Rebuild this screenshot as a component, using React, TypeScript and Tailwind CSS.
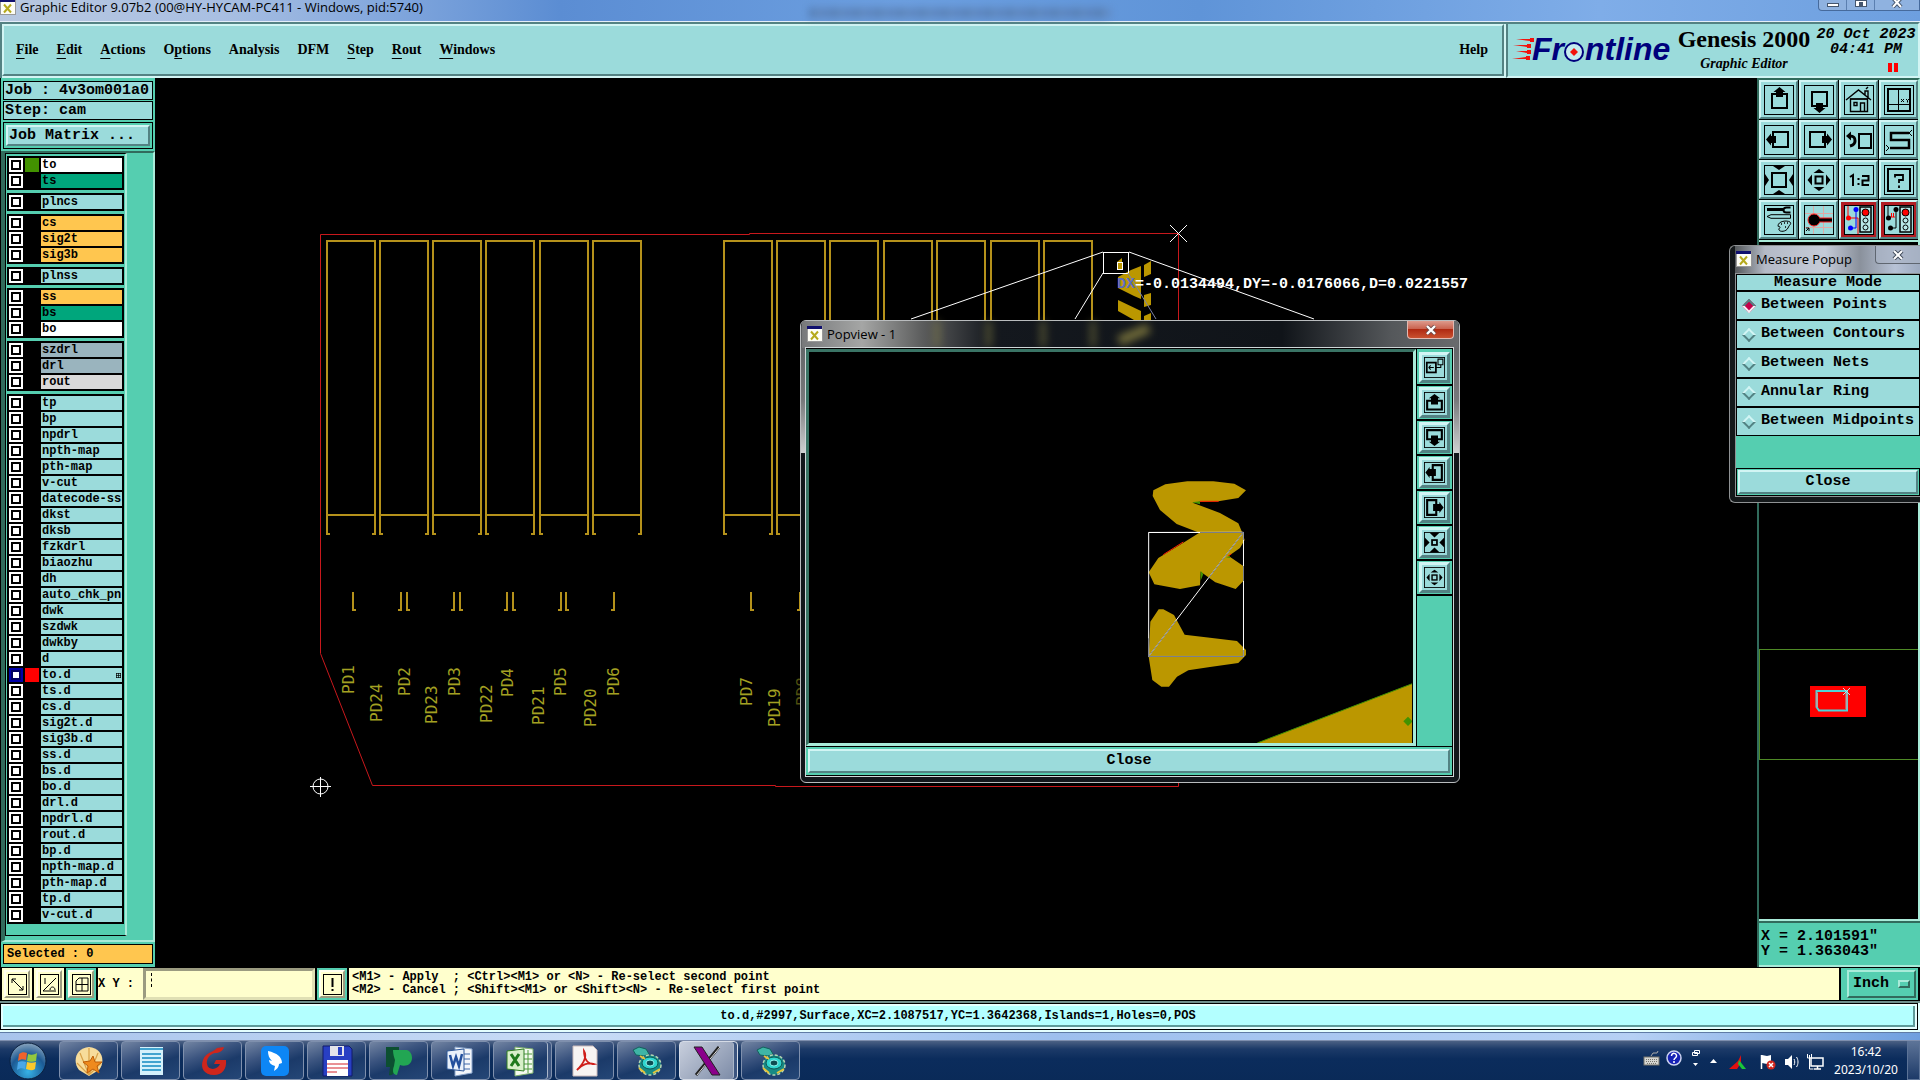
import React, { useState } from "react";
import { clsx } from "clsx";

interface Layer {
  name: string;
  bg: string;
  swatch?: string;
  checked?: boolean;
}

const CYAN = "bg-[#9bdbdb]";
const ORANGE = "bg-[#ffc64f]";
const GREEN = "bg-[#00a67c]";
const STEEL = "bg-[#9ab4be]";

const plain = (names: string): Layer[] => names.split(" ").map((name) => ({ name, bg: CYAN }));

const layerGroups: Layer[][] = [
  [
    { name: "to", bg: "bg-white", swatch: "bg-[#429200]" },
    { name: "ts", bg: GREEN },
  ],
  plain("plncs"),
  [
    { name: "cs", bg: ORANGE },
    { name: "sig2t", bg: ORANGE },
    { name: "sig3b", bg: ORANGE },
  ],
  plain("plnss"),
  [
    { name: "ss", bg: ORANGE },
    { name: "bs", bg: GREEN },
    { name: "bo", bg: "bg-white" },
  ],
  [
    { name: "szdrl", bg: STEEL },
    { name: "drl", bg: STEEL },
    { name: "rout", bg: "bg-[#d9d9d9]" },
  ],
  [
    ...plain("tp bp npdrl npth-map pth-map v-cut datecode-ss dkst dksb fzkdrl biaozhu dh auto_chk_pnl dwk szdwk dwkby d"),
    { name: "to.d", bg: CYAN, swatch: "bg-[#ff0000]", checked: true },
    ...plain("ts.d cs.d sig2t.d sig3b.d ss.d bs.d bo.d drl.d npdrl.d rout.d bp.d npth-map.d pth-map.d tp.d v-cut.d"),
  ],
];

const menus = [
  { label: "File", key: 0 },
  { label: "Edit", key: 0 },
  { label: "Actions", key: 0 },
  { label: "Options", key: 1 },
  { label: "Analysis", key: -1 },
  { label: "DFM", key: -1 },
  { label: "Step", key: 0 },
  { label: "Rout", key: 0 },
  { label: "Windows", key: 0 },
];

// Motif style bevels
const raised =
  "border-t-[#d2f5f4] border-l-[#d2f5f4] border-r-[#538283] border-b-[#538283] bg-[#9bdbdb]";

/* ---------- Icons ---------- */

const iconShapes: Record<string, React.ReactNode> = {
  up: (
    <>
      <path d="M12 9H8v14h15V9h-4" fill="none" strokeWidth="2" />
      <path d="M15.500 2l6 5h-2.500v5h-7V7H9.500z" fill="#000" stroke="none" />
    </>
  ),
  down: (
    <>
      <path d="M12 21H8V7h15v14h-4" fill="none" strokeWidth="2" />
      <path d="M15.500 28l6-5h-2.500v-5h-7v5H9.500z" fill="#000" stroke="none" />
    </>
  ),
  left: (
    <>
      <path d="M9 11V7h15v15H9v-4" fill="none" strokeWidth="2" />
      <path d="M2 14.500l5-6v2.500h5v7H7v2.500z" fill="#000" stroke="none" />
    </>
  ),
  right: (
    <>
      <path d="M21 11V7H6v15h15v-4" fill="none" strokeWidth="2" />
      <path d="M28 14.500l-5-6v2.500h-5v7h5v2.500z" fill="#000" stroke="none" />
    </>
  ),
  smallUp: (
    <>
      <path d="M10 12.500H4.500v12.500h21V12.500H20" fill="none" strokeWidth="3" />
      <path d="M15 3l8 6h-3v9H10V9H7z" fill="#000" stroke="none" />
    </>
  ),
  smallDown: (
    <>
      <path d="M10 17.500H4.500V4.500h21v13H20" fill="none" strokeWidth="3" />
      <path d="M15 27l8-6h-3v-9H10v9H7z" fill="#000" stroke="none" />
    </>
  ),
  smallLeft: (
    <>
      <path d="M12.500 10V4.500h13v21h-13V20" fill="none" strokeWidth="3" />
      <path d="M2 15l6-8v3h9v10H8v3z" fill="#000" stroke="none" />
    </>
  ),
  smallRight: (
    <>
      <path d="M17.500 10V4.500h-13v21h13V20" fill="none" strokeWidth="3" />
      <path d="M28 15l-6-8v3h-9v10h9v3z" fill="#000" stroke="none" />
    </>
  ),
  home: (
    <>
      <path d="M2 15L14.500 5 27 15M21 10V6h3v6M22 4l2-2M6.500 14v12.500h17V14zM16.500 26V18h4v8M10 17.500h3v3h-3z" fill="none" strokeWidth="1.400" />
      <path d="M6 14h18" />
    </>
  ),
  panel: (
    <>
      <rect x="4" y="4" width="22" height="22" fill="none" strokeWidth="2" />
      <path d="M14.500 4v22M4 19.500h22M17 14l3 3M20 14l-3 3M22 14l1.500 1.500L25 14M23.500 15.500V17.500" fill="none" />
    </>
  ),
  undo: (
    <>
      <rect x="15" y="9" width="12" height="14" fill="none" strokeWidth="2" />
      <path d="M6 11c5 0 5 3 5 5s-1 4-5 5" fill="none" strokeWidth="3" />
      <path d="M2 11l5-4.500v9z" fill="#000" stroke="none" />
    </>
  ),
  serpent: (
    <>
      <path d="M25 8H7v7h18v8H6" fill="none" strokeWidth="2.500" />
      <path d="M28 5l-3 3 3 3M2 20l3 3-3 3" fill="none" />
    </>
  ),
  fitIn: (
    <>
      <rect x="8" y="8" width="14" height="14" fill="none" strokeWidth="2" />
      <path d="M9 1h12l-6 4zM9 29h12l-6-4zM1 9v12l4-6zM29 9v12l-4-6z" fill="#000" stroke="none" />
    </>
  ),
  fitOut: (
    <>
      <rect x="11.500" y="11.500" width="7" height="7" fill="none" strokeWidth="2" />
      <path d="M9.500 8h11L15 4zM9.500 22h11L15 26zM8 9.500v11L3.500 15zM22 9.500v11l4.500-5.500z" fill="#000" stroke="none" />
    </>
  ),
  smallIn: (
    <>
      <rect x="11.500" y="11.500" width="7" height="7" fill="none" strokeWidth="2.500" />
      <path d="M8 1h14l-7 7zM8 29h14l-7-7zM1 8v14l7-7zM29 8v14l-7-7z" fill="#000" stroke="none" />
    </>
  ),
  half: <path d="M6 12l3-2v11M14.500 13v2M14.500 18v2M18 11h6.500v4.500H18.500V20H25" fill="none" strokeWidth="2" />,
  help: (
    <>
      <rect x="4" y="4" width="22" height="22" fill="none" strokeWidth="2" />
      <path d="M11 12.500V10h8v5h-4v3M15 20.500v2.500" fill="none" strokeWidth="1.800" />
    </>
  ),
  tools: (
    <>
      <path d="M3 4.500h17" strokeWidth="3" />
      <path d="M26.500 2.500h-4a3 2.500 0 0 0 0 5h4" fill="none" strokeWidth="2" />
      <path d="M3 11.500l4-1.800h19.500v3.600H7z" fill="none" />
      <path d="M14 21c0-5 9-6 12-4 2 2-1 3-2 6-2 4-8 4-9 2s2-2 1-3-2 0-2-1z" fill="none" />
      <path d="M17 19h1M20 18h1M23 18h1M21 22h1" strokeWidth="1.500" />
    </>
  ),
  pad: (
    <>
      <path d="M9.500 1v28M19.500 1v28M1 8.500h28M1 22.500h28" stroke="#e0a9a5" fill="none" />
      <path d="M10 15h18" stroke="#ff2020" strokeWidth="5" />
      <circle cx="10" cy="15" r="6" fill="#000" stroke="#ff2020" />
      <path d="M10 15h18" strokeWidth="3" />
      <path d="M2 26l3-3M2 23h3v3" fill="none" />
    </>
  ),
  netBlue: (
    <>
      <path d="M4 1v12h10v16" stroke="#f00" fill="none" />
      <path d="M12 5v18H7" stroke="#00f" fill="none" />
      <circle cx="4.500" cy="13" r="2.500" fill="#f00" stroke="none" />
      <circle cx="12" cy="4.500" r="2.500" fill="#00f" stroke="none" />
      <circle cx="6.500" cy="23" r="2.500" fill="#00f" stroke="none" />
      <rect x="16" y="2" width="11" height="25" fill="#b9e6e6" strokeWidth="1.500" />
      <circle cx="21.500" cy="7.500" r="3.500" fill="#f00" />
      <circle cx="21.500" cy="15.500" r="2.500" fill="none" />
      <circle cx="21.500" cy="22.500" r="2.500" fill="none" />
    </>
  ),
  netBlack: (
    <>
      <path d="M4 1v12M12 5v18H7" fill="none" />
      <path d="M6 12h5M7.500 8v4M9.500 8v4" stroke="#f00" fill="none" />
      <circle cx="4.500" cy="13" r="2.500" fill="#000" stroke="none" />
      <circle cx="12" cy="4.500" r="2.500" fill="#000" stroke="none" />
      <circle cx="6.500" cy="23" r="2.500" fill="#000" stroke="none" />
      <rect x="16" y="2" width="11" height="25" fill="#b9e6e6" strokeWidth="1.500" />
      <circle cx="21.500" cy="7.500" r="3.500" fill="#f00" />
      <circle cx="21.500" cy="15.500" r="2.500" fill="none" />
      <circle cx="21.500" cy="22.500" r="2.500" fill="none" />
    </>
  ),
  popup: (
    <>
      <rect x="4" y="8" width="13" height="14" fill="none" strokeWidth="2.500" />
      <path d="M20 3h7v8h-7zM17 15h7v-4M7 15h7M9.500 12L7 15l2.500 3" fill="none" strokeWidth="1.500" />
    </>
  ),
};

function ToolIcon({ name, size }: { name: string; size: number }) {
  return (
    <svg width={size} height={size} viewBox="0 0 30 30" stroke="#000" className="shrink-0">
      <rect x="0.500" y="0.500" width="29" height="29" fill="none" strokeWidth={size < 30 ? 1.5 : 1} />
      {iconShapes[name]}
    </svg>
  );
}

function XIcon() {
  return (
    <svg width="16" height="16" viewBox="0 0 16 16" className="shrink-0">
      <rect x="0.500" y="0.500" width="15" height="15" fill="#fdfdf5" stroke="#999" />
      <rect width="15" height="3" fill="#10106e" />
      <path d="M4 5.500l7 8M11 5.500l-7 8" stroke="#b5a91c" strokeWidth="2" />
    </svg>
  );
}

/* ---------- Top bars ---------- */

function TitleBar() {
  return (
    <header className="relative flex h-[22px] items-start justify-between border-b border-[#e4edf8] bg-[linear-gradient(90deg,#b8c8e0_0px,#a9bfe2_220px,#7fa5dc_400px,#5b8dd3_560px,#6c9fe0_900px,#5f94d8_1200px,#7fade8_1600px,#6d9fdf_1920px)]">
      <div className="absolute top-2 left-[810px] h-[10px] w-[300px] bg-[repeating-linear-gradient(90deg,#30507a_0px,#6f93c4_9px,#44659a_15px,#7aa0d5_22px)] opacity-70 blur-xs" />
      <div className="relative flex h-[14px] items-center gap-1">
        <XIcon />
        <h1 className="text-[13px] leading-[14px] whitespace-nowrap text-black">
          Graphic Editor 9.07b2 (00@HY-HYCAM-PC411 - Windows, pid:5740)
        </h1>
      </div>
      <div className="relative flex h-[11px] w-[102px] rounded-bl border border-t-0 border-[#466a9c] bg-[#8fb2e0]">
        <button aria-label="Minimize" className="flex w-7 items-center justify-center border-r border-[#5b7fb0]">
          <span className="h-1 w-3 border border-[#45566e] bg-white" />
        </button>
        <button aria-label="Restore" className="flex w-7 items-start justify-center border-r border-[#5b7fb0]">
          <span className="flex h-[7px] w-3 items-center justify-center border border-[#45566e] bg-white">
            <span className="h-1 w-1 bg-[#45566e]" />
          </span>
        </button>
        <button aria-label="Close window" className="flex flex-1 items-start justify-center">
          <svg width="12" height="8" viewBox="0 0 12 8">
            <path d="M2 -2l8 9M10 -2l-8 9" stroke="#45566e" strokeWidth="4" />
            <path d="M2 -2l8 9M10 -2l-8 9" stroke="#fff" strokeWidth="2" />
          </svg>
        </button>
      </div>
    </header>
  );
}

function FrontlineLogo() {
  return (
    <svg width="162" height="30" viewBox="0 0 162 30" className="overflow-visible" aria-label="Frontline">
      <path d="M4 3l14 0 0-1 4 0 0 4-4 0 0-1zM1 9l14 0 0-1 4 0 0 4-4 0 0-1zM4 15l11 0 0-1 4 0 0 4-4 0 0-1zM0 23l14-2 0-1 4 0 0 4-4 0 0-1z" fill="#f2120c" />
      <text x="20" y="24" className="font-['Liberation_Sans'] text-[32px] font-bold italic" fill="#00007c">
        Fr
      </text>
      <text x="73" y="24" className="font-['Liberation_Sans'] text-[32px] font-bold italic" fill="#00007c">
        ntline
      </text>
      <circle cx="62" cy="16" r="9" fill="#c5ebee" stroke="#00007c" strokeWidth="2" />
      <path d="M62 12l4 4-4 4-4-4z" fill="#f2120c" />
    </svg>
  );
}

function MenuBar() {
  return (
    <div className="flex h-[56px] bg-[#d2f5f4] font-['Liberation_Serif',serif] font-bold text-black">
      <nav className="flex flex-1 items-center border-t-2 border-l-2 border-[#538283] pr-[2px] pb-[2px]">
        <div className="flex h-full flex-1 items-center justify-between border-2 border-t-[#d2f5f4] border-l-[#d2f5f4] border-r-[#538283] border-b-[#538283] bg-[#9bdbdb] pr-[14px] pl-3">
          <div className="flex gap-[18px]">
            {menus.map(({ label, key }) => (
              <button key={label} className="text-[14px] leading-5">
                {key < 0 ? (
                  label
                ) : (
                  <>
                    {label.slice(0, key)}
                    <span className="underline underline-offset-4">{label[key]}</span>
                    {label.slice(key + 1)}
                  </>
                )}
              </button>
            ))}
          </div>
          <button className="text-[14px] leading-5">Help</button>
        </div>
      </nav>
      <div className="flex w-[414px] items-start gap-[2px] border-2 border-t-[#538283] border-l-[#538283] border-r-[#d2f5f4] border-b-[#d2f5f4] bg-[#9bdbdb] pl-1">
        <div className="pt-3">
          <FrontlineLogo />
        </div>
        <div className="w-[136px] text-center whitespace-nowrap">
          <div className="text-[24px] leading-[30px]">Genesis 2000</div>
          <div className="text-[14px] leading-5 italic">Graphic Editor</div>
        </div>
        <div className="flex flex-1 flex-col pt-[3px] text-center font-['Liberation_Mono',monospace] text-[15px] leading-[15px] whitespace-nowrap italic">
          <span>20 Oct 2023</span>
          <span>04:41 PM</span>
          <span className="mt-[6px] flex justify-end gap-[2px] pr-[20px]">
            <span className="h-[9px] w-1 bg-[#ff0000]" />
            <span className="h-[9px] w-1 bg-[#ff0000]" />
          </span>
        </div>
      </div>
    </div>
  );
}

/* ---------- Left panel ---------- */

function LayerRow({ layer }: { layer: Layer }) {
  return (
    <div className="flex h-4 items-start">
      <label
        className={clsx(
          "flex h-[14px] w-[14px] items-center justify-center",
          layer.checked ? "bg-[#0000a8]" : "bg-white"
        )}
      >
        <input
          type="checkbox"
          aria-label={layer.name}
          defaultChecked={layer.checked}
          className={clsx(
            "size-[10px] appearance-none border-2 bg-white",
            layer.checked ? "border-[#000060]" : "border-black"
          )}
        />
      </label>
      <span className={clsx("mx-[2px] h-[14px] w-[14px]", layer.swatch)} />
      <button
        className={clsx(
          "flex h-[14px] flex-1 items-center justify-between overflow-hidden pl-[1px] text-left text-[12px] leading-[14px] whitespace-nowrap",
          layer.bg
        )}
      >
        {layer.name}
        {layer.checked && (
          <svg width="5" height="5" viewBox="0 0 5 5" className="mr-[1px]">
            <path d="M0 .5h5M0 2.500h5M0 4.500h5M.5 0v5M2.500 0v5M4.500 0v5" stroke="#000" strokeWidth=".7" />
          </svg>
        )}
      </button>
    </div>
  );
}

function LayerPanel() {
  return (
    <aside className="flex w-[155px] shrink-0 flex-col border-l border-black bg-[#55ceb0] pb-px text-black">
      <div className="flex flex-col gap-px px-[2px] pt-[3px] text-[15px]">
        <div className="border border-black bg-[#9bdbdb] pl-px leading-[17px]">Job : 4v3om001a0</div>
        <div className="border border-black bg-[#9bdbdb] pl-px leading-[17px]">Step: cam</div>
        <div className="mt-px border border-black p-[2px]">
          <button className={clsx("block w-full border-2 pl-px text-left leading-[17px]", raised)}>Job Matrix ...</button>
        </div>
      </div>

      {/* Layer list */}
      <div className="mt-[2px] flex flex-1 border-2 border-t-[#316b5c] border-l-[4px] border-l-[#316b5c] border-r-[#a9ebd9] border-b-[#a9ebd9]">
        <div className="mb-1 flex w-[122px] flex-col gap-[3px] border border-r-2 border-black border-r-[#a9ebd9] px-px pt-[2px] pb-2">
          {layerGroups.map((group, idx) => (
            <div key={idx} className="bg-black px-[2px] pt-[2px]">
              {group.map((layer) => (
                <LayerRow key={layer.name} layer={layer} />
              ))}
            </div>
          ))}
        </div>
      </div>

      <div className="mx-[2px] mt-[2px] mb-[2px] border border-black bg-[#ffc64f] pl-[3px] text-[12px] leading-[18px]">Selected : 0</div>
    </aside>
  );
}

/* ---------- Board drawing ---------- */

const padColumns = [326, 379, 432, 485, 539, 592, 723, 776, 829, 883, 936, 990, 1043];

const padLabels: [string, number, number][] = [
  ["PD1", 354, 694],
  ["PD24", 382, 722],
  ["PD2", 410, 696],
  ["PD23", 437, 724],
  ["PD3", 460, 696],
  ["PD22", 492, 723],
  ["PD4", 513, 697],
  ["PD21", 544, 725],
  ["PD5", 566, 696],
  ["PD20", 596, 727],
  ["PD6", 619, 696],
  ["PD7", 752, 706],
  ["PD19", 780, 727],
  ["PD8", 808, 706],
];

const leftHooks = [353, 407, 460, 513, 566, 751];
const rightHooks = [401, 454, 507, 561, 614, 800];

function BoardCanvas() {
  return (
    <svg width="1602" height="889" viewBox="155 78 1602 889" className="block">
      {/* Profile */}
      <path
        d="M320.500 653.500V234.500H749.500V233.500H1178.500V786.500H775.500V785.500H372.500z"
        fill="none"
        stroke="#c8181c"
      />
      <g fill="none" stroke="#b5921b" strokeWidth="2">
        {padColumns.map((x) => (
          <g key={x}>
            <path d={`M${x + 1} 535V241H${x + 49}V535M${x + 1} 515H${x + 49}`} />
            <path d={`M${x + 1} 534h3M${x + 49} 534h-3`} />
          </g>
        ))}
        {leftHooks.map((x) => (
          <path key={x} d={`M${x} 592v18h3`} />
        ))}
        {rightHooks.map((x) => (
          <path key={x} d={`M${x} 592v18h-3`} />
        ))}
      </g>
      <g fill="#a3a022" className="font-['DejaVu_Sans_Mono',monospace] text-[16px] font-normal">
        {padLabels.map(([label, x, y]) => (
          <text key={label} transform={`translate(${x} ${y}) rotate(-90)`} fillOpacity={label === "PD8" ? 0.5 : 1}>
            {label}
          </text>
        ))}
      </g>

      {/* Silkscreen glyphs next to the measured spot */}
      <g fill="#bb9700">
        <path d="M1118 277l13-7 10-4v33l-7-3-16-8zM1144 265l7-4v13l-7 3zM1144 295l7-2v12l-7 2zM1118 300l23 11v9h-7l-16-9zM1144 316l7-3v7h-7z" />
        <path d="M1117 262l5-4v12h-5z" />
      </g>

      {/* Popview source window and its leaders */}
      <g fill="none" stroke="#fff">
        <rect x="1103.500" y="252.500" width="25" height="21" />
        <path d="M1103 252L911 319M1129 252L1314 319M1103 273L1075 319" />
        <path d="M1128 273L1156 319" stroke="#7d83a5" />
        <rect x="1117.500" y="262.500" width="5" height="7" />
        <path d="M1170 225l17 17M1187 225l-17 17" />
        <circle cx="320.500" cy="786.500" r="7.500" />
        <path d="M310 786.500h21M320.500 777v20" />
      </g>
      <g fill="#fff" className="font-['Liberation_Mono',monospace] text-[15px] font-bold">
        <text x="1117" y="288">
          <tspan fill="#5b6cc0">DX</tspan>=-0.0134494,DY=-0.0176066,D=0.0221557
        </text>
      </g>
    </svg>
  );
}

/* ---------- Popview window ---------- */

const popviewTools = ["popup", "smallUp", "smallDown", "smallLeft", "smallRight", "smallIn", "fitOut"];

function Popview() {
  return (
    <section className="absolute top-[242px] left-[645px] flex h-[463px] w-[660px] flex-col rounded-md border border-[#b9bcbe] bg-[#12161b] pr-[5px] pb-[5px] pl-1">
      {/* Glass frame with the board showing through */}
      <div className="absolute inset-x-0 top-0 h-[132px] rounded-t-md bg-[linear-gradient(180deg,#5a5d60_0%,#77797b_60%,#cfd1d2_100%)]" />
      <div className="absolute inset-x-[1px] top-0 h-[27px] bg-[linear-gradient(90deg,#77797b_0px,#a5a6a5_60px,#5c5d5d_120px,#14181e_190px,#101419_480px,#55585b_590px,#6a6c6e_660px)]" />
      <svg width="360" height="26" viewBox="0 0 360 26" className="absolute top-0 left-0 opacity-60 blur-xs">
        <path d="M136 0v26M188 0v26M242 0v26M292 0v26" stroke="#8a8445" strokeWidth="5" />
        <path d="M318 20l30-13" stroke="#b5a94f" strokeWidth="10" />
      </svg>
      <div className="relative flex h-[26px] shrink-0 items-start justify-between">
        <div className="flex items-center gap-1 pt-[5px] pl-[2px]">
          <XIcon />
          <h2 className="text-[13px] leading-4 text-black">Popview - 1</h2>
        </div>
        <button
          aria-label="Close Popview"
          className="flex h-[18px] w-[47px] items-center justify-center rounded-b border border-t-0 border-[#e3b9b1] bg-[linear-gradient(180deg,#dd9a8c_0%,#c9604c_48%,#b02a12_50%,#c9502f_100%)]"
        >
          <svg width="12" height="10" viewBox="0 0 12 10">
            <path d="M2 1l8 8M10 1l-8 8" stroke="#6b4a48" strokeWidth="4" />
            <path d="M2 1l8 8M10 1l-8 8" stroke="#fff" strokeWidth="2.400" />
          </svg>
        </button>
      </div>

      <div className="relative flex flex-1 flex-col border border-[#cfd6d8] bg-black py-px pr-px">
        <div className="flex flex-1">
          <div className="flex-1 overflow-hidden border-[3px] border-t-[#3a7465] border-l-[#3a7465] border-r-[#a9ebd9] border-b-[#a9ebd9] bg-black">
            <svg width="603" height="391" viewBox="0 0 603 391" className="block">
              <g transform="translate(291 -32) scale(.3333)">
                <g fill="#bb9700">
                  <path d="M160 511L196 493 262 484H340L403 491 438 511 415 534 355 544 300 545 278 548 360 579 415 610 427 638 434 660 420 684 386 708 430 738V783L407 807 346 787 302 755 300 796 240 807 163 793 146 757 175 714 250 668 298 638 230 612 180 570 158 528z" />
                  <path d="M176 868H190L222 885 254 944 330 953 411 963 438 990V1005L415 1029 330 1041 265 1051 231 1070 207 1100H184L157 1080 146 1010 151 905z" />
                  <path d="M472 1269L940 1090V1269z" />
                </g>
                <path d="M276 547l24-3v9zM302 752l8 10-8 20zM378 712l12-4v6z" fill="#429200" />
                <path d="M300 544h56M190 704l60-38M384 708l10-6" stroke="#ff2000" strokeWidth="3" fill="none" />
                <path d="M472 1269L940 1090" stroke="#429200" strokeWidth="3" />
                <path d="M924 1190l14 14-14 14-14-14z" fill="#429200" />
                <g fill="none" strokeWidth="3">
                  <path d="M146 637.500H430.500V1009.500H146zL430 637" stroke="#fff" />
                  <path d="M146 1009L430 637" stroke="#fff" />
                  <path d="M300 637.500H430V660M430.500 738V783M430 990V1009.500H146V955M146 1009L228 902M325 775L430 637" stroke="#767a86" />
                </g>
              </g>
            </svg>
          </div>
          <div className="ml-px flex w-[35px] flex-col gap-[2px] bg-[#55ceb0] pt-[2px]">
            {popviewTools.map((name) => (
              <div key={name} className="shadow-[0_2px_0_#000]">
                <button
                  aria-label={name}
                  className={clsx("mx-[2px] my-px flex h-[31px] w-[31px] items-center justify-center border-[3px]", raised)}
                >
                  <ToolIcon name={name} size={21} />
                </button>
              </div>
            ))}
          </div>
        </div>
        <div className="mt-px bg-[#55ceb0] p-[2px]">
          <button className={clsx("block w-full border-2 text-[15px] leading-[20px] text-black", raised)}>Close</button>
        </div>
      </div>
    </section>
  );
}

/* ---------- Measure popup ---------- */

const measureModes = ["Between Points", "Between Contours", "Between Nets", "Annular Ring", "Between Midpoints"];

function MeasurePopup() {
  const [mode, setMode] = useState(measureModes[0]);

  return (
    <section className="absolute top-[167px] right-0 flex w-[191px] flex-col rounded-l-md border border-r-0 border-[#8f9294] bg-[#14181a] pb-[5px] pl-[5px] text-black">
      <div className="flex h-[27px] items-start justify-between bg-[linear-gradient(90deg,#55595c_0px,#b4bac6_30px,#c5cbd8_90px,#8a919c_125px,#b7c2d6_160px,#98a5bb_190px)]">
        <div className="flex items-center gap-1 pt-[5px] pl-px">
          <XIcon />
          <h2 className="text-[13px] leading-4">Measure Popup</h2>
        </div>
        <button
          aria-label="Close Measure Popup"
          className="flex h-[18px] w-[45px] items-center justify-center rounded-bl border border-t-0 border-r-0 border-[#5f6670] bg-[#a9b3c4]/70"
        >
          <svg width="12" height="10" viewBox="0 0 12 10">
            <path d="M2 1l8 8M10 1l-8 8" stroke="#444d5c" strokeWidth="4" />
            <path d="M2 1l8 8M10 1l-8 8" stroke="#fff" strokeWidth="2" />
          </svg>
        </button>
      </div>
      <div className="border border-r-0 border-[#8f9294] bg-[#55ceb0] text-[15px]">
        <fieldset className="flex flex-col gap-[2px] bg-black p-px">
          <legend className="float-left w-full bg-[#9bdbdb] text-center leading-[15px]">Measure Mode</legend>
          {measureModes.map((item) => (
            <label key={item} className="flex h-[27px] items-center gap-[7px] bg-[#9bdbdb] pl-[7px] whitespace-nowrap">
              <input
                type="radio"
                name="measure-mode"
                checked={mode === item}
                onChange={() => setMode(item)}
                className="size-[10px] shrink-0 rotate-45 appearance-none border-2 border-t-[#d2f5f4] border-l-[#d2f5f4] border-r-[#538283] border-b-[#538283] checked:border-t-[#538283] checked:border-l-[#538283] checked:border-r-[#f4f0f5] checked:border-b-[#f4f0f5] checked:bg-[#c4004a]"
              />
              {item}
            </label>
          ))}
        </fieldset>
        <div className="mt-8 border border-black p-px">
          <button className={clsx("block w-full border-2 leading-[20px]", raised)}>Close</button>
        </div>
      </div>
    </section>
  );
}

/* ---------- Right panel ---------- */

const viewTools = [
  "up", "down", "home", "panel",
  "left", "right", "undo", "serpent",
  "fitIn", "fitOut", "half", "help",
  "tools", "pad", "netBlue", "netBlack",
];

function ViewPanel() {
  return (
    <aside className="flex w-[163px] shrink-0 flex-col border-l-2 border-[#316b5c] bg-black">
      <div className="grid grid-cols-4 gap-px border-t-2 border-r-2 border-b-2 border-t-[#316b5c] border-r-[#a9ebd9] border-b-[#a9ebd9] pb-px">
        {viewTools.map((name) => (
          <button
            key={name}
            aria-label={name}
            className={clsx(
              "flex h-[39px] items-center justify-center border-2",
              raised,
              name.startsWith("net") && "shadow-[inset_0_0_0_3px_#b01e23]"
            )}
          >
            <ToolIcon name={name} size={30} />
          </button>
        ))}
      </div>

      {/* Overview */}
      <div className="flex flex-1 flex-col border-r-2 border-b-2 border-[#a9ebd9]">
        <svg width="159" height="677" viewBox="0 0 159 677" className="block">
          <rect x="0.500" y="407.500" width="160" height="110" fill="none" stroke="#4f8a26" />
          <rect x="51" y="444" width="56" height="31" fill="#ff0000" />
          <path d="M57.500 449H88V468.500H60L57.500 465z" fill="none" stroke="#4fd2d8" strokeWidth="2" />
          <path d="M58 451V465M87.500 451V467" stroke="#aaa" strokeWidth="2" />
          <path d="M84 446l7 7M91 446l-7 7" stroke="#b8e6e6" />
        </svg>
      </div>
      <div className="border-t-2 border-b-2 border-t-[#316b5c] border-b-[#a9ebd9] bg-[#55ceb0] pt-[6px] pb-[6px] pl-[2px] text-[15px] leading-[15px] text-black">
        <div>X = 2.101591"</div>
        <div>Y = 1.363043"</div>
      </div>
    </aside>
  );
}

/* ---------- Bottom bars ---------- */

const creamBevel = "border-2 border-t-[#fffff0] border-l-[#fffff0] border-r-[#9b9b80] border-b-[#9b9b80]";

function SmallBtn({ label, teal, children }: { label: string; teal?: boolean; children: React.ReactNode }) {
  return (
    <div className={clsx("w-[30px] shrink-0 p-[2px]", teal ? "bg-[#55ceb0]" : "bg-[#ffffcd]")}>
      <button aria-label={label} className={clsx("flex h-full w-full items-center justify-center bg-[#ffffcd]", creamBevel)}>
        <svg width="19" height="21" viewBox="0 0 19 21" fill="none" stroke="#000">
          <rect x="0.500" y="0.500" width="18" height="20" />
          {children}
        </svg>
      </button>
    </div>
  );
}

function MessageRow() {
  return (
    <div className="flex h-[34px] gap-[2px] bg-black py-px pl-[2px] text-[12px] text-black">
      <SmallBtn label="Snap">
        <path d="M4 5l11 11M4 9V5h4M15 12v4h-4" />
      </SmallBtn>
      <SmallBtn label="Angle">
        <path d="M3 17L16 4M5 4v6M3 17h13M10 16c0-4 5-4 5 0" />
      </SmallBtn>
      <SmallBtn label="Grid" teal>
        <path d="M4 7l3-3h9v13H4zM10 4v13M4 10.500h12" />
      </SmallBtn>
      <div className="flex w-[217px] shrink-0 items-center justify-between bg-[#ffffcd]">
        <label htmlFor="xy">X Y :</label>
        <div className="relative h-full">
          <input
            id="xy"
            type="text"
            className="h-full w-[172px] border-[3px] border-t-[#9b9b80] border-l-[#9b9b80] border-r-[#e0e0b4] border-b-[#e0e0b4] bg-[#ffffcd] px-2 outline-none"
          />
          <span className="pointer-events-none absolute top-[5px] left-2 h-[14px] border-l border-dashed border-black" />
        </div>
      </div>
      <SmallBtn label="Alert" teal>
        <path d="M9.500 4v9M9.500 15v2" strokeWidth="2" />
      </SmallBtn>
      <div className="flex-1 bg-[#ffffcd] pt-[3px] pl-[3px] leading-[13px] whitespace-pre">
        <div>{"<M1> - Apply  ; <Ctrl><M1> or <N> - Re-select second point"}</div>
        <div>{"<M2> - Cancel ; <Shift><M1> or <Shift><N> - Re-select first point"}</div>
      </div>
      <div className="mr-[2px] w-[77px] bg-[#55ceb0] py-[2px] pr-[2px] pl-[6px]">
        <div className="relative flex h-full items-center border-2 border-t-[#a9ebd9] border-l-[#a9ebd9] border-r-[#316b5c] border-b-[#316b5c]">
          <select aria-label="Units" className="w-full appearance-none bg-transparent pl-1 text-[15px] leading-5 outline-none">
            <option>Inch</option>
            <option>mm</option>
          </select>
          <span className="pointer-events-none absolute right-1 h-2 w-3 border-2 border-t-[#a9ebd9] border-l-[#a9ebd9] border-r-[#316b5c] border-b-[#316b5c]" />
        </div>
      </div>
    </div>
  );
}

function StatusRow() {
  return (
    <div className="h-[31px] border-t-2 border-[#6f8e8c] bg-[#e4ffff] pr-[2px] pb-[2px] text-[12px] text-black">
      <div className="h-full border border-black bg-[#e4ffff] p-[2px]">
        <div className="flex h-full items-center justify-center border-r-2 border-b-2 border-[#5d9a99] bg-[#b3ffff]">
          to.d,#2997,Surface,XC=2.1087517,YC=1.3642368,Islands=1,Holes=0,POS
        </div>
      </div>
    </div>
  );
}

function GenesisIcon() {
  return (
    <>
      <path d="M2 5l6-3 7 2 3 5-5 2-8-1z" fill="#3fb5a6" stroke="#12615c" />
      <ellipse cx="19" cy="20" rx="11" ry="10" fill="#188a84" stroke="#b7d6b4" strokeDasharray="3 2" strokeWidth="1.500" />
      <ellipse cx="19" cy="18" rx="8" ry="6" fill="#2fd6cf" stroke="#0e5552" />
      <ellipse cx="19" cy="18" rx="4" ry="3" fill="#0e4c52" stroke="#8df5ef" />
      <path d="M8 23l6 5M22 28l7-4" stroke="#e7c33a" strokeWidth="2" />
      <path d="M9 11l5 3" stroke="#e7c33a" strokeWidth="2" />
    </>
  );
}

const apps: { name: string; icon: React.ReactNode; active?: boolean; stacked?: boolean }[] = [
  {
    name: "Shell",
    icon: (
      <>
        <path d="M16 31L6 25C-1 16 3 3 16 2c13 1 17 14 10 23z" fill="#f7dc9b" />
        <path d="M16 30L4 18M16 30L7 8M16 30V3M16 30L25 8M16 30L28 18" stroke="#d8a148" strokeWidth="1.200" />
        <path d="M20 11l2 6 7 0-5 4 2 7-6-4-6 4 1-7-5-4 7-1z" fill="#ef8a1d" stroke="#bd5d08" />
      </>
    ),
  },
  {
    name: "Notes",
    icon: (
      <>
        <rect x="5" y="2" width="23" height="28" fill="#d5f1fb" />
        <path d="M5 4h23M7 9h19M7 13h19M7 17h19M7 21h19M7 25h19" stroke="#42a3cf" strokeWidth="2" />
      </>
    ),
  },
  { name: "G", icon: <path d="M27 2c-1 4-5 6-9 6-5 1-9 6-8 11 1 7 11 6 13 0h-6l2-4h10c1 9-4 15-12 15C7 30 3 23 6 15 9 7 17 7 20 3z" fill="#cf261c" /> },
  {
    name: "Bird",
    icon: (
      <>
        <rect x="2" y="1" width="28" height="30" rx="5" fill="#0d86f5" />
        <path d="M9 6c9 2 14 6 14 12l-3 1c0 3-2 5-5 7l1-5c-4-1-6-3-6-6l3 1c-3-3-4-6-4-10z" fill="#fff" />
      </>
    ),
  },
  {
    name: "Commander",
    icon: (
      <>
        <path d="M2 1h26l3 3v27H2z" fill="#283fc3" stroke="#101b6b" />
        <path d="M9 1h14v10H9z" fill="#e4e4ea" />
        <path d="M17 2h4v8h-4z" fill="#283fc3" />
        <path d="M6 15h21v16H6z" fill="#fff" />
        <path d="M6 19h21M6 23h21M6 27h10" stroke="#d3232b" />
      </>
    ),
  },
  {
    name: "Phone",
    icon: (
      <>
        <path d="M3 2h13v20l-4 2c0 4-3 7-6 6l1-8H3z" fill="#0c4f31" />
        <path d="M10 5h14c6 2 7 12 1 15-3 1-6 1-8 0l-3 10c-4 0-5-4-3-9l1-6c-1-3-2-6-2-10z" fill="#22a653" />
      </>
    ),
  },
  {
    name: "Word",
    icon: (
      <>
        <path d="M10 2l17 2v24l-17 3z" fill="#f3f6fb" stroke="#8aa5cc" />
        <path d="M19 9h6M19 14h6M19 19h6M19 24h6" stroke="#3e68ab" />
        <path d="M2 6l17-2v22L2 24z" fill="#e9f0fa" stroke="#2d5698" />
        <path d="M5 10l3 11 3-9 3 9 3-12" fill="none" stroke="#234f9d" strokeWidth="2.500" />
      </>
    ),
  },
  {
    name: "Excel",
    icon: (
      <>
        <path d="M10 2l18 2v24l-18 3z" fill="#f4faf0" stroke="#7fb26c" />
        <path d="M19 9h8M19 14h8M19 19h8M19 24h8M23 5v23" stroke="#4f9a3c" />
        <path d="M2 6l17-2v22L2 24z" fill="#d8efc9" stroke="#2f7d22" />
        <path d="M6 9l8 12M14 9L6 21" stroke="#1f7a1c" strokeWidth="3" />
      </>
    ),
    stacked: true,
  },
  {
    name: "Acrobat",
    icon: (
      <>
        <path d="M4 1h20l4 4v26H4z" fill="#f7f4f3" stroke="#cbb" />
        <path d="M15 6c3 5 0 12-7 19 4-5 11-8 17-6-5 1-10-4-10-13z" fill="none" stroke="#cf1f1b" strokeWidth="1.800" />
      </>
    ),
  },
  { name: "Genesis", icon: <GenesisIcon /> },
  {
    name: "Xming",
    icon: (
      <>
        <path d="M28 2L5 30" stroke="#222" strokeWidth="3" />
        <path d="M29 2L6 30" stroke="#ddd" strokeWidth="1" />
        <path d="M3 2h8l18 28h-8z" fill="#8a008a" stroke="#222" />
      </>
    ),
    active: true,
    stacked: true,
  },
  { name: "Genesis toolkit", icon: <GenesisIcon /> },
];

function Taskbar() {
  return (
    <footer className="flex h-10 items-stretch border-t border-[#7f8fae] bg-[linear-gradient(180deg,#4c6184_0px,#1c3a68_8px,#0b2c5c_18px,#0a2a58_40px)] font-['Noto_Sans',sans-serif] text-white">
      <button aria-label="Start" className="flex w-[56px] items-center justify-center">
        <svg width="38" height="38" viewBox="0 0 38 38">
          <defs>
            <radialGradient id="orb" cx=".5" cy=".8" r=".8">
              <stop offset="0" stopColor="#36b3e8" />
              <stop offset=".6" stopColor="#1c5a94" />
              <stop offset="1" stopColor="#8aa4bd" />
            </radialGradient>
          </defs>
          <circle cx="19" cy="19" r="18" fill="url(#orb)" stroke="#0a1f3d" />
          <path d="M10 12c3-2 5-2 8-1l-1 7c-3-1-5-1-8 1z" fill="#f0622b" />
          <path d="M19 12c3 1 6 1 9-1l-1 8c-3 1-6 1-9 0z" fill="#93c83e" />
          <path d="M9 20c3-1 5-1 8 0l-1 7c-3-1-5-1-8 1z" fill="#4aa7e8" />
          <path d="M18 20c3 1 6 1 9 0l-1 7c-3 2-6 1-9 0z" fill="#fbc92d" />
        </svg>
      </button>
      <div className="flex gap-[3px] pl-[3px]">
        {apps.map((app) => (
          <button
            key={app.name}
            aria-label={app.name}
            className={clsx(
              "flex w-[59px] items-start justify-center rounded border pt-[3px]",
              app.active
                ? "border-[#d5dbe6] bg-[linear-gradient(135deg,#c8cfdd,#7a89a5)]"
                : "border-[#7f90ad] bg-[linear-gradient(160deg,#7385a3_0%,#3c5580_35%,#1b3a69_60%,#254777_100%)]",
              app.stacked && "pr-1 shadow-[inset_-3px_0_0_#3c5580,inset_-4px_0_0_#aab6c9]"
            )}
          >
            <svg width="32" height="32" viewBox="0 0 32 32" fill="none">
              {app.icon}
            </svg>
          </button>
        ))}
      </div>

      {/* Tray */}
      <div className="ml-auto flex items-center">
        <svg width="182" height="40" viewBox="0 0 182 40" fill="none" aria-label="Notification area">
          <rect x="1" y="16" width="15" height="8" fill="#d6d6d2" stroke="#77756d" />
          <path d="M3 18.500h11M3 20.500h11M4 22.500h9" stroke="#77756d" strokeDasharray="1 1" />
          <path d="M8 15l2-3 4 0 1-2" stroke="#a9a9a9" />
          <circle cx="31" cy="17" r="7" fill="#1722b5" stroke="#cdd3f0" strokeWidth="1.500" />
          <path d="M28.500 15c0-4 5.500-3 5 0 0 2-2.500 2-2.500 4M31 20v2" stroke="#fff" strokeWidth="1.500" />
          <path d="M51.500 9.500h5v3h-5zM49.500 11.500h5v3h-5z" stroke="#fff" />
          <path d="M50 22h5l-2.500 3zM67 22h7l-3.500-4z" fill="#fff" />
          <path d="M86 28l9-8 3-6 0 8-4 6z" fill="#e01010" />
          <path d="M96 19l7 9h-4l-4-5z" fill="#1bc53a" />
          <path d="M118.500 14v14" stroke="#fff" strokeWidth="1.500" />
          <path d="M119 14l5 1 4-1v8l-4 1-5-1z" fill="#fff" />
          <circle cx="128" cy="24" r="4.500" fill="#d2281e" />
          <path d="M126 22l4 4M130 22l-4 4" stroke="#fff" strokeWidth="1.500" />
          <path d="M142 18h3l4-4v14l-4-4h-3z" fill="#fff" />
          <path d="M151 18c1 2 1 4 0 6M153.500 16c2 3 2 7 0 10" stroke="#fff" />
          <path d="M168 17h12v8h-12zM171 28h7M174.500 25v3" stroke="#fff" strokeWidth="1.500" />
          <path d="M166.500 14v14h4M164.500 13v4h4v-4" stroke="#fff" />
        </svg>
        <div className="w-[82px] text-center text-[12px] leading-[18px]">
          <div>16:42</div>
          <div>2023/10/20</div>
        </div>
      </div>
      <button aria-label="Show desktop" className="w-[13px] border border-[#5c7397] bg-[linear-gradient(180deg,#5c7397,#1d3a68)]" />
    </footer>
  );
}

export default function App() {
  return (
    <div className="flex min-h-screen flex-col overflow-hidden bg-black font-['Open_Sans',sans-serif]">
      <TitleBar />
      <MenuBar />
      <main className="relative flex flex-1 font-['Liberation_Mono',monospace] font-bold [&_h2]:font-['Open_Sans',sans-serif] [&_h2]:font-normal">
        <LayerPanel />
        <div className="relative min-w-0 flex-1 overflow-hidden bg-black">
          <BoardCanvas />
          <Popview />
        </div>
        <ViewPanel />
        <MeasurePopup />
      </main>
      <div className="font-['Liberation_Mono',monospace] font-bold">
        <MessageRow />
        <StatusRow />
      </div>
      <div className="h-2 border-t border-[#5f7ba6] bg-[linear-gradient(90deg,#a8c4ec,#c9dcf6_30%,#9dbfee_55%,#b6d0f4_85%,#6f9fdf)]" />
      <Taskbar />
    </div>
  );
}
